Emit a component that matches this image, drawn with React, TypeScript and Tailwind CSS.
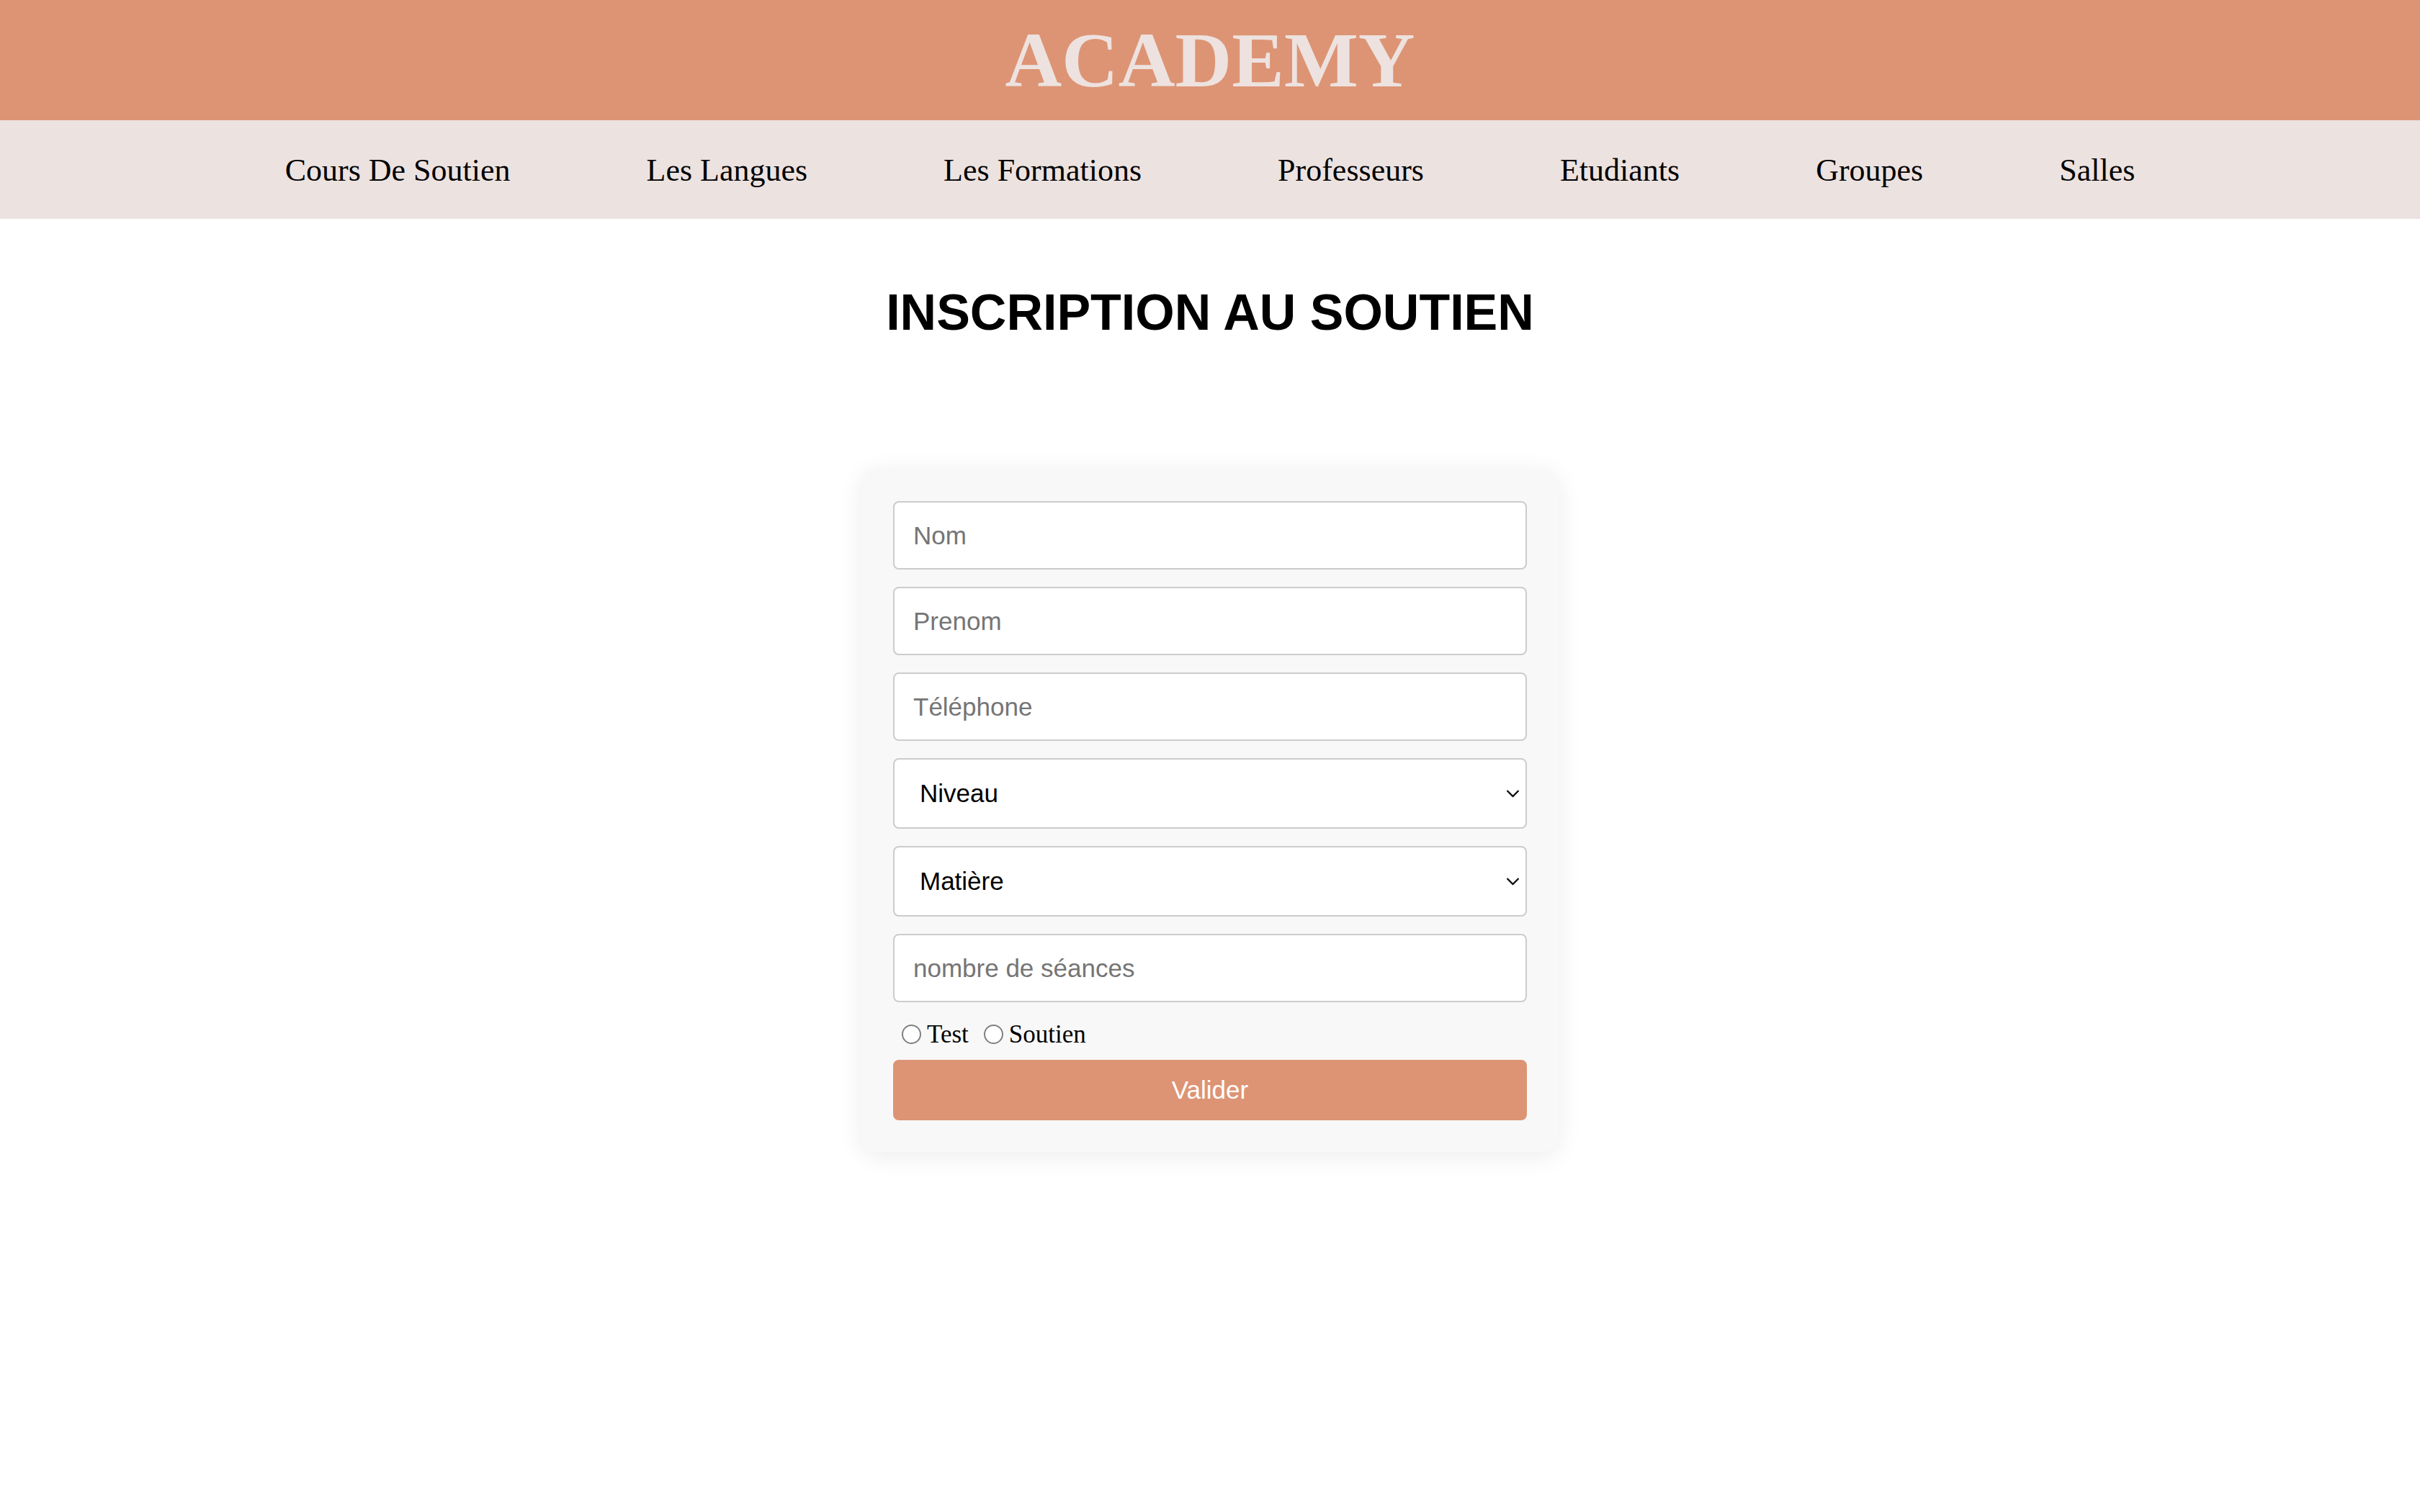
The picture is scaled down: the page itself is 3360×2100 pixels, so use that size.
const navItems = [
  "Cours De Soutien",
  "Les Langues",
  "Les Formations",
  "Professeurs",
  "Etudiants",
  "Groupes",
  "Salles",
];

function TextField({ placeholder }: { placeholder: string }) {
  return (
    <input
      type="text"
      placeholder={placeholder}
      className="h-[95px] w-full rounded-[8px] border-2 border-[#cccccc] bg-white pl-[26px] pr-[22px] font-['Liberation_Sans',Arial,sans-serif] text-[35px] text-black outline-none placeholder:text-[#757575]"
    />
  );
}

function SelectField({ label }: { label: string }) {
  return (
    <div className="relative">
      <select
        defaultValue=""
        className="h-[98px] w-full appearance-none rounded-[8px] border-2 border-[#cccccc] bg-white pl-[35px] pr-[40px] font-['Liberation_Sans',Arial,sans-serif] text-[35px] text-black outline-none"
      >
        <option value="">{label}</option>
      </select>
      <svg
        className="pointer-events-none absolute right-[10px] top-1/2 -translate-y-1/2"
        width="19"
        height="11"
        viewBox="0 0 19 11"
        fill="none"
      >
        <path d="M1.5 1.5 L9.5 9.5 L17.5 1.5" stroke="#111" strokeWidth="2.4" />
      </svg>
    </div>
  );
}

function Radio({ label }: { label: string }) {
  return (
    <label className="flex items-center gap-[8px]">
      <input
        type="radio"
        name="type"
        className="h-[27px] w-[27px] appearance-none rounded-full border-2 border-[#808080] bg-white"
      />
      <span className="font-['Liberation_Serif','Times_New_Roman',serif] text-[35px] leading-none text-black">
        {label}
      </span>
    </label>
  );
}

export default function App() {
  return (
    <div className="min-h-screen bg-white">
      <header className="flex h-[167px] items-center justify-center bg-[#dd9474]">
        <h1 className="font-['Liberation_Serif','Times_New_Roman',serif] text-[109px] font-bold leading-none text-[#ede2df]">
          ACADEMY
        </h1>
      </header>

      <nav className="flex h-[137px] items-center justify-center gap-[189px] bg-[#ece2e0]">
        {navItems.map((item) => (
          <a
            key={item}
            href="#"
            className="pt-[3px] font-['Liberation_Serif','Times_New_Roman',serif] text-[44px] leading-none text-black"
          >
            {item}
          </a>
        ))}
      </nav>

      <main className="flex flex-col items-center">
        <h2 className="mt-[95px] font-['Liberation_Sans',Arial,sans-serif] text-[70px] font-bold leading-[70px] text-black">
          INSCRIPTION AU SOUTIEN
        </h2>

        <form className="mt-[182px] w-[968px] rounded-[22px] bg-[#f8f8f8] px-[44px] pb-[44px] pt-[45px] shadow-[0_6px_34px_rgba(0,0,0,0.08)]">
          <div className="flex flex-col gap-[24px]">
            <TextField placeholder="Nom" />
            <TextField placeholder="Prenom" />
            <TextField placeholder="Téléphone" />
            <SelectField label="Niveau" />
            <SelectField label="Matière" />
            <TextField placeholder="nombre de séances" />
          </div>

          <div className="mt-[30px] flex h-[28px] items-center gap-[21px] pl-[12px]">
            <Radio label="Test" />
            <Radio label="Soutien" />
          </div>

          <button
            type="button"
            className="mt-[22px] h-[84px] w-full rounded-[8px] bg-[#dd9474] font-['Liberation_Sans',Arial,sans-serif] text-[35px] text-white"
          >
            Valider
          </button>
        </form>
      </main>
    </div>
  );
}
